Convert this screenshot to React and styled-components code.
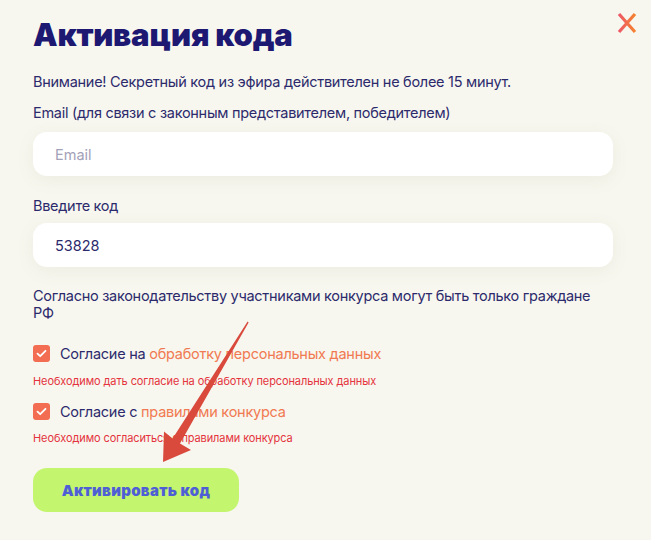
import React from "react";
import styled, { createGlobalStyle } from "styled-components";

const Global = createGlobalStyle`
  html, body { margin: 0; padding: 0; background: #f7f7ef; }
  body { font-family: Inter, "Noto Sans", sans-serif; }
  * { box-sizing: border-box; }
`;

const Page = styled.div`
  position: relative;
  width: 651px;
  height: 540px;
  background: #f7f7ef;
  padding: 17px 38px 0 33px;
  overflow: hidden;
`;

const Header = styled.div`
  display: flex;
  justify-content: space-between;
  align-items: flex-start;
`;

const Title = styled.h1`
  margin: 0;
  font-family: Inter, sans-serif;
  font-weight: 900;
  font-size: 31px;
  line-height: 36px;
  letter-spacing: -0.2px;
  color: #1d1872;
`;

const Close = styled.button`
  border: 0;
  background: none;
  padding: 0;
  margin: -5px -25px 0 0;
  width: 22px;
  height: 22px;
  cursor: pointer;
`;

const Text = styled.p`
  margin: ${(p) => p.$mt || 0}px 0 0;
  font-size: 14.5px;
  line-height: ${(p) => p.$lh || 20}px;
  color: #2c2a6c;
  letter-spacing: -0.28px;
`;

const Input = styled.input`
  display: block;
  width: 580px;
  height: 44px;
  margin-top: ${(p) => p.$mt}px;
  border: 0;
  border-radius: 14px;
  background: #ffffff;
  box-shadow: 0 4px 18px rgba(120, 120, 90, 0.08);
  padding: 0 22px;
  font-family: Inter, sans-serif;
  font-size: 14.5px;
  color: #2c2a6c;
  outline: none;
  &::placeholder { color: #a3a1b8; }
`;

const CheckRow = styled.label`
  display: flex;
  align-items: center;
  gap: 10px;
  margin-top: ${(p) => p.$mt}px;
  font-size: 14.5px;
  line-height: 17px;
  color: #2c2a6c;
  letter-spacing: -0.25px;
`;

const Box = styled.span`
  flex: none;
  width: 17px;
  height: 17px;
  border-radius: 3px;
  background: #f26d51;
  display: flex;
  align-items: center;
  justify-content: center;
`;

const Link = styled.a`
  color: #f17a52;
  text-decoration: none;
`;

const Error = styled.div`
  margin-top: ${(p) => p.$mt}px;
  font-size: 11px;
  line-height: 14px;
  color: #e5333d;
  letter-spacing: -0.1px;
`;

const Button = styled.button`
  display: flex;
  align-items: center;
  justify-content: center;
  margin-top: ${(p) => p.$mt}px;
  width: 206px;
  height: 44px;
  border: 0;
  border-radius: 14px;
  background: #c4f56f;
  font-family: Inter, sans-serif;
  font-weight: 900;
  font-size: 15px;
  color: #4e5fd6;
  letter-spacing: 0.3px;
  cursor: pointer;
`;

const Overlay = styled.svg`
  position: absolute;
  left: 0;
  top: 0;
  pointer-events: none;
`;

const Check = () => (
  <svg width="11" height="9" viewBox="0 0 11 9">
    <path d="M1.5 4.6 L4.2 7.2 L9.5 1.8" fill="none" stroke="#fff" strokeWidth="1.8" strokeLinecap="round" strokeLinejoin="round" />
  </svg>
);

export default function App() {
  return (
    <>
      <Global />
      <Page>
        <Header>
          <Title>Активация кода</Title>
          <Close aria-label="Закрыть">
            <svg width="22" height="22" viewBox="0 0 22 22">
              <defs>
                <linearGradient id="xg" x1="0" y1="0" x2="1" y2="0">
                  <stop offset="0" stopColor="#ee5868" />
                  <stop offset="1" stopColor="#f5822f" />
                </linearGradient>
              </defs>
              <path d="M3 2 L19 20 M19 2 L3 20" stroke="url(#xg)" strokeWidth="3.2" strokeLinecap="butt" />
            </svg>
          </Close>
        </Header>
        <Text $mt={19}>Внимание! Секретный код из эфира действителен не более 15 минут.</Text>
        <Text $mt={11}>Email (для связи с законным представителем, победителем)</Text>
        <Input $mt={9} placeholder="Email" />
        <Text $mt={20}>Введите код</Text>
        <Input $mt={7} defaultValue="53828" />
        <Text $mt={20} $lh={17}>
          Согласно законодательству участниками конкурса могут быть только граждане РФ
        </Text>
        <CheckRow $mt={24}>
          <Box><Check /></Box>
          <span>
            Согласие на <Link href="#">обработку персональных данных</Link>
          </span>
        </CheckRow>
        <Error $mt={12}>Необходимо дать согласие на обработку персональных данных</Error>
        <CheckRow $mt={15}>
          <Box><Check /></Box>
          <span>
            Согласие с <Link href="#">правилами конкурса</Link>
          </span>
        </CheckRow>
        <Error $mt={11}>Необходимо согласиться с правилами конкурса</Error>
        <Button $mt={23}>Активировать код</Button>
        <Overlay width="651" height="540" viewBox="0 0 651 540">
          <polygon
            points="247.6,321.6 248.6,322.4 180,443.5 191,450 163,462 164,431.5 172.6,438.6"
            fill="#d94a3d"
          />
        </Overlay>
      </Page>
    </>
  );
}
